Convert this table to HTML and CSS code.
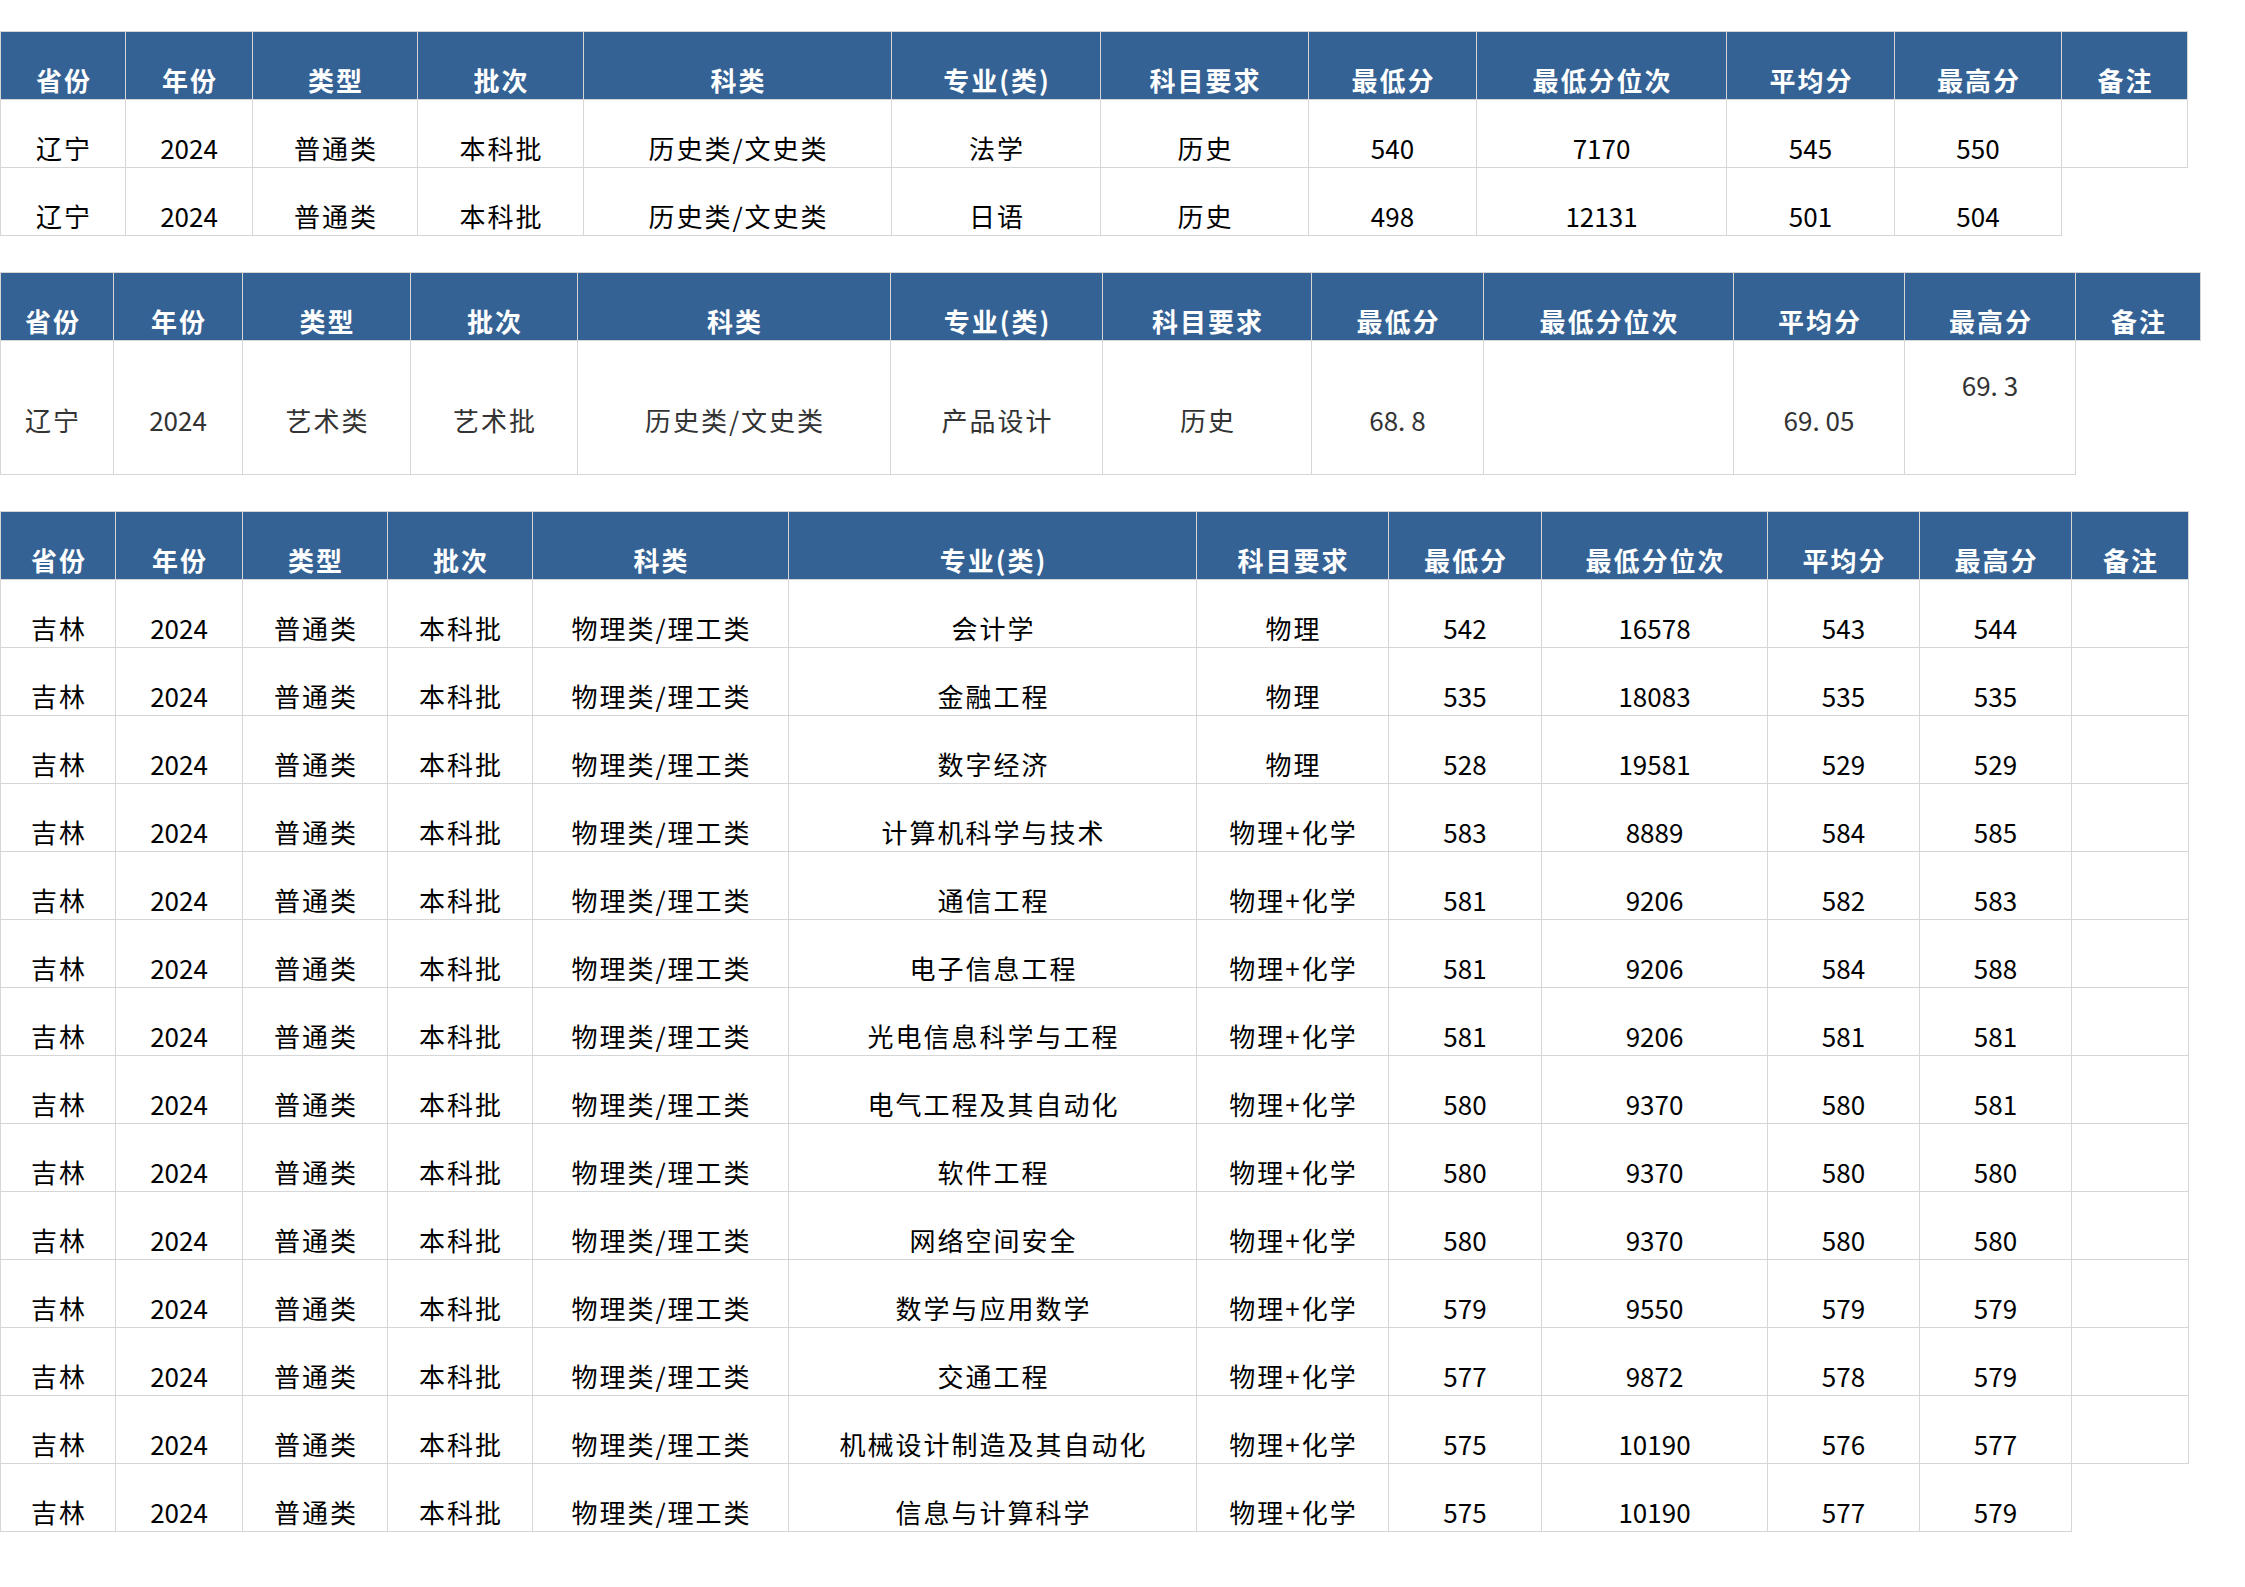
FILE: index.html
```html
<!DOCTYPE html>
<html lang="zh-CN">
<head>
<meta charset="utf-8">
<title>录取分数</title>
<link rel="stylesheet" href="styles.css">
</head>
<body>
<div class="page">

<table class="grid t1">
  <colgroup><col><col><col><col><col><col><col><col><col><col><col><col></colgroup>
  <thead>
    <tr><th>省份</th><th>年份</th><th>类型</th><th>批次</th><th>科类</th><th>专业(类)</th><th>科目要求</th><th>最低分</th><th>最低分位次</th><th>平均分</th><th>最高分</th><th>备注</th></tr>
  </thead>
  <tbody>
    <tr><td>辽宁</td><td class="n">2024</td><td>普通类</td><td>本科批</td><td>历史类/文史类</td><td>法学</td><td>历史</td><td class="n">540</td><td class="n">7170</td><td class="n">545</td><td class="n">550</td><td></td></tr>
    <tr><td>辽宁</td><td class="n">2024</td><td>普通类</td><td>本科批</td><td>历史类/文史类</td><td>日语</td><td>历史</td><td class="n">498</td><td class="n">12131</td><td class="n">501</td><td class="n">504</td><td class="blank"></td></tr>
  </tbody>
</table>

<table class="grid t2">
  <colgroup><col><col><col><col><col><col><col><col><col><col><col><col></colgroup>
  <thead>
    <tr><th>省份</th><th>年份</th><th>类型</th><th>批次</th><th>科类</th><th>专业(类)</th><th>科目要求</th><th>最低分</th><th>最低分位次</th><th>平均分</th><th>最高分</th><th>备注</th></tr>
  </thead>
  <tbody>
    <tr class="art"><td>辽宁</td><td class="n">2024</td><td>艺术类</td><td>艺术批</td><td>历史类/文史类</td><td>产品设计</td><td>历史</td><td class="n">68<span class="dot">.</span>8</td><td></td><td class="n">69<span class="dot">.</span>05</td><td class="n high">69<span class="dot">.</span>3</td><td class="blank"></td></tr>
  </tbody>
</table>

<table class="grid t3">
  <colgroup><col><col><col><col><col><col><col><col><col><col><col><col></colgroup>
  <thead>
    <tr><th>省份</th><th>年份</th><th>类型</th><th>批次</th><th>科类</th><th>专业(类)</th><th>科目要求</th><th>最低分</th><th>最低分位次</th><th>平均分</th><th>最高分</th><th>备注</th></tr>
  </thead>
  <tbody>
    <tr><td>吉林</td><td class="n">2024</td><td>普通类</td><td>本科批</td><td>物理类/理工类</td><td>会计学</td><td>物理</td><td class="n">542</td><td class="n">16578</td><td class="n">543</td><td class="n">544</td><td></td></tr>
    <tr><td>吉林</td><td class="n">2024</td><td>普通类</td><td>本科批</td><td>物理类/理工类</td><td>金融工程</td><td>物理</td><td class="n">535</td><td class="n">18083</td><td class="n">535</td><td class="n">535</td><td></td></tr>
    <tr><td>吉林</td><td class="n">2024</td><td>普通类</td><td>本科批</td><td>物理类/理工类</td><td>数字经济</td><td>物理</td><td class="n">528</td><td class="n">19581</td><td class="n">529</td><td class="n">529</td><td></td></tr>
    <tr><td>吉林</td><td class="n">2024</td><td>普通类</td><td>本科批</td><td>物理类/理工类</td><td>计算机科学与技术</td><td>物理+化学</td><td class="n">583</td><td class="n">8889</td><td class="n">584</td><td class="n">585</td><td></td></tr>
    <tr><td>吉林</td><td class="n">2024</td><td>普通类</td><td>本科批</td><td>物理类/理工类</td><td>通信工程</td><td>物理+化学</td><td class="n">581</td><td class="n">9206</td><td class="n">582</td><td class="n">583</td><td></td></tr>
    <tr><td>吉林</td><td class="n">2024</td><td>普通类</td><td>本科批</td><td>物理类/理工类</td><td>电子信息工程</td><td>物理+化学</td><td class="n">581</td><td class="n">9206</td><td class="n">584</td><td class="n">588</td><td></td></tr>
    <tr><td>吉林</td><td class="n">2024</td><td>普通类</td><td>本科批</td><td>物理类/理工类</td><td>光电信息科学与工程</td><td>物理+化学</td><td class="n">581</td><td class="n">9206</td><td class="n">581</td><td class="n">581</td><td></td></tr>
    <tr><td>吉林</td><td class="n">2024</td><td>普通类</td><td>本科批</td><td>物理类/理工类</td><td>电气工程及其自动化</td><td>物理+化学</td><td class="n">580</td><td class="n">9370</td><td class="n">580</td><td class="n">581</td><td></td></tr>
    <tr><td>吉林</td><td class="n">2024</td><td>普通类</td><td>本科批</td><td>物理类/理工类</td><td>软件工程</td><td>物理+化学</td><td class="n">580</td><td class="n">9370</td><td class="n">580</td><td class="n">580</td><td></td></tr>
    <tr><td>吉林</td><td class="n">2024</td><td>普通类</td><td>本科批</td><td>物理类/理工类</td><td>网络空间安全</td><td>物理+化学</td><td class="n">580</td><td class="n">9370</td><td class="n">580</td><td class="n">580</td><td></td></tr>
    <tr><td>吉林</td><td class="n">2024</td><td>普通类</td><td>本科批</td><td>物理类/理工类</td><td>数学与应用数学</td><td>物理+化学</td><td class="n">579</td><td class="n">9550</td><td class="n">579</td><td class="n">579</td><td></td></tr>
    <tr><td>吉林</td><td class="n">2024</td><td>普通类</td><td>本科批</td><td>物理类/理工类</td><td>交通工程</td><td>物理+化学</td><td class="n">577</td><td class="n">9872</td><td class="n">578</td><td class="n">579</td><td></td></tr>
    <tr><td>吉林</td><td class="n">2024</td><td>普通类</td><td>本科批</td><td>物理类/理工类</td><td>机械设计制造及其自动化</td><td>物理+化学</td><td class="n">575</td><td class="n">10190</td><td class="n">576</td><td class="n">577</td><td></td></tr>
    <tr><td>吉林</td><td class="n">2024</td><td>普通类</td><td>本科批</td><td>物理类/理工类</td><td>信息与计算科学</td><td>物理+化学</td><td class="n">575</td><td class="n">10190</td><td class="n">577</td><td class="n">579</td><td class="blank"></td></tr>
  </tbody>
</table>

</div>
</body>
</html>
```

FILE: styles.css
```css
html, body {
  margin: 0;
  padding: 0;
  background: #ffffff;
}

body {
  font-family: "Noto Sans CJK SC", "Noto Sans", "Liberation Sans", sans-serif;
  color: #000000;
}

.page {
  display: flex;
  flex-direction: column;
  align-items: flex-start;
  gap: 36px;
  padding-top: 31px;
}

.grid {
  border-collapse: collapse;
  table-layout: fixed;
}

.grid th,
.grid td {
  border: 1px solid #d6d6d6;
  padding: 0 0 3px 2px;
  text-align: center;
  vertical-align: bottom;
  font-size: 26px;
  line-height: 32px;
  letter-spacing: 2px;
  white-space: nowrap;
  overflow: hidden;
}

.grid th {
  height: 64px;
  background: #346295;
  color: #ffffff;
  font-weight: bold;
}

.grid td {
  height: 64px;
  font-weight: normal;
}

.grid td.n {
  letter-spacing: 0;
  padding-left: 0;
}

.grid td.blank {
  border-right: none;
  border-bottom: none;
}

/* art row (table 2) */
.grid tr.art td {
  height: 109px;
  color: #333333;
  vertical-align: middle;
  padding-top: 24px;
  padding-bottom: 0;
}

.grid tr.art td.high {
  height: 87px;
  padding-top: 0;
  padding-bottom: 46px;
}

.dot {
  margin-right: 6px;
}

.t2 td:first-child,
.t2 th:first-child {
  padding-right: 10px;
}

/* column widths — table 1 */
.t1 { width: 2187px; }
.t1 col:nth-child(1) { width: 125px; }
.t1 col:nth-child(2) { width: 127px; }
.t1 col:nth-child(3) { width: 165px; }
.t1 col:nth-child(4) { width: 166px; }
.t1 col:nth-child(5) { width: 308px; }
.t1 col:nth-child(6) { width: 209px; }
.t1 col:nth-child(7) { width: 208px; }
.t1 col:nth-child(8) { width: 168px; }
.t1 col:nth-child(9) { width: 250px; }
.t1 col:nth-child(10) { width: 168px; }
.t1 col:nth-child(11) { width: 167px; }
.t1 col:nth-child(12) { width: 126px; }

/* column widths — table 2 */
.t2 { width: 2200px; }
.t2 col:nth-child(1) { width: 113px; }
.t2 col:nth-child(2) { width: 129px; }
.t2 col:nth-child(3) { width: 168px; }
.t2 col:nth-child(4) { width: 167px; }
.t2 col:nth-child(5) { width: 313px; }
.t2 col:nth-child(6) { width: 212px; }
.t2 col:nth-child(7) { width: 209px; }
.t2 col:nth-child(8) { width: 172px; }
.t2 col:nth-child(9) { width: 250px; }
.t2 col:nth-child(10) { width: 171px; }
.t2 col:nth-child(11) { width: 171px; }
.t2 col:nth-child(12) { width: 125px; }

/* column widths — table 3 */
.t3 { width: 2188px; }
.t3 col:nth-child(1) { width: 115px; }
.t3 col:nth-child(2) { width: 127px; }
.t3 col:nth-child(3) { width: 145px; }
.t3 col:nth-child(4) { width: 145px; }
.t3 col:nth-child(5) { width: 256px; }
.t3 col:nth-child(6) { width: 408px; }
.t3 col:nth-child(7) { width: 192px; }
.t3 col:nth-child(8) { width: 153px; }
.t3 col:nth-child(9) { width: 226px; }
.t3 col:nth-child(10) { width: 152px; }
.t3 col:nth-child(11) { width: 152px; }
.t3 col:nth-child(12) { width: 117px; }
```
